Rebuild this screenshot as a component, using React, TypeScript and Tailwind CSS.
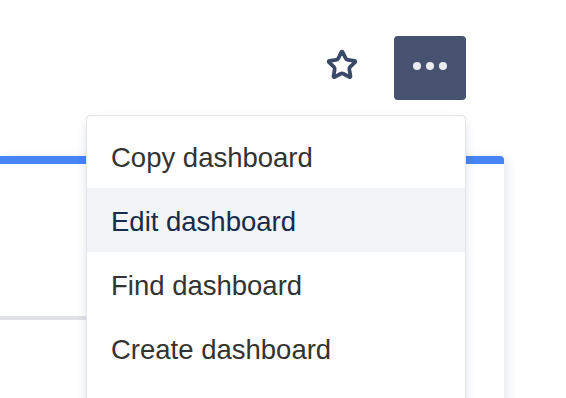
import { Star } from "lucide-react";

const items = ["Copy dashboard", "Edit dashboard", "Find dashboard", "Create dashboard"];

export default function App() {
    return (
        <div className="relative w-[566px] h-[398px] overflow-hidden bg-white font-['Liberation_Sans',sans-serif]">

            {/* Header actions */}
            <div className="h-[156px] flex justify-end items-start pt-9 pr-[100px] gap-[36px]">
                <div className="h-16 flex items-center">
                    <Star className="w-8 h-8 text-[#3b4968] -mt-[7px]" strokeWidth={2.8} />
                </div>
                <button className="w-[72px] h-16 rounded bg-[#465270] flex items-center justify-center gap-[5px] pb-1">
                    <span className="w-[8px] h-[8px] rounded-full bg-[#ebecf0]" />
                    <span className="w-[8px] h-[8px] rounded-full bg-[#ebecf0]" />
                    <span className="w-[8px] h-[8px] rounded-full bg-[#ebecf0]" />
                </button>
            </div>

            {/* Dashboard card */}
            <div className="w-[504px] h-[260px] bg-white border-t-8 border-[#4785f4] rounded-tr-[4px] shadow-[4px_0_12px_-2px_rgba(9,30,66,0.12)]">
                <div className="h-[152px]" />
                <div className="w-[320px] h-1 bg-[#dfe1e6]" />
            </div>

            {/* Dropdown menu */}
            <div className="absolute left-[86px] top-[115px] w-[380px] h-[320px] bg-white border border-[#e4e5e9] rounded-[4px] py-2 shadow-[0_4px_12px_-2px_rgba(9,30,66,0.18)]">
                {items.map((item, i) => (
                    <div
                        key={item}
                        className={`h-16 px-6 pt-[4px] flex items-center text-[27.5px] ${i === 1 ? "bg-[#f3f4f6] text-[#172b4d]" : "text-[#333333]"}`}
                    >
                        {item}
                    </div>
                ))}
            </div>
        </div>
    );
}
